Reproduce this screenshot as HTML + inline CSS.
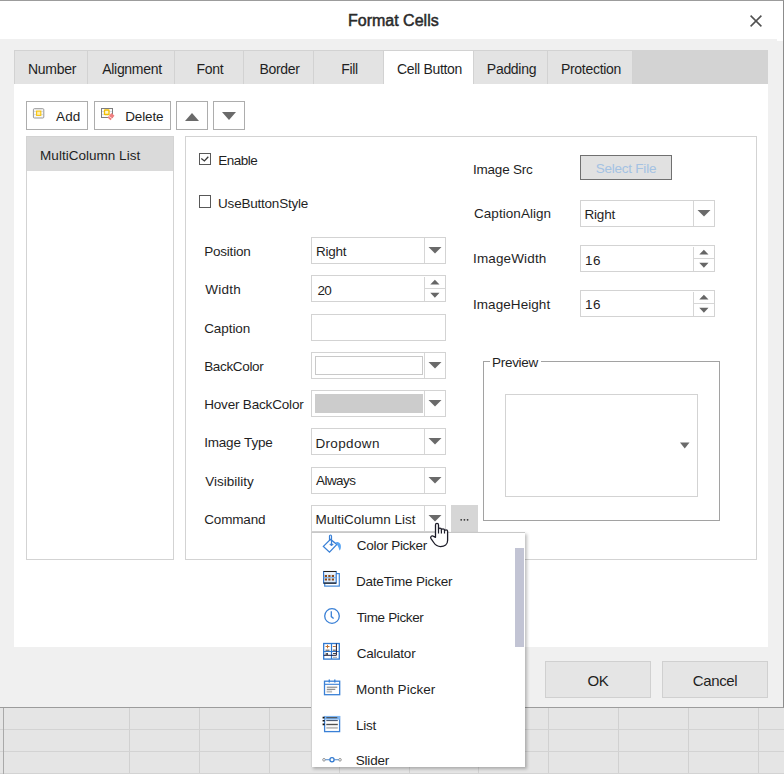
<!DOCTYPE html>
<html><head><meta charset="utf-8">
<style>
*{box-sizing:border-box;margin:0;padding:0}
html,body{width:784px;height:774px;overflow:hidden}
body{position:relative;background:#e5e5e5;font-family:"Liberation Sans",sans-serif;font-size:13px;color:#1f1f1f}
.a{position:absolute}
.t{position:absolute;white-space:pre;line-height:1;font-size:13px;color:#1f1f1f}
.gv{position:absolute;top:708px;height:66px;width:1px;background:#d1d1d1}
.gh{position:absolute;left:0;width:784px;height:1px;background:#d3d3d3}
.tab{position:absolute;top:50px;height:34px;background:#e3e3e3;border-top:1px solid #d2d2d2;border-left:1px solid #d2d2d2}
.tt{position:absolute;white-space:pre;line-height:1;font-size:14px;letter-spacing:-0.3px;color:#1f1f1f}
.btn{position:absolute;background:#fff;border:1px solid #adadad}
.box{position:absolute;background:#fff;border:1px solid #d0d0d0}
.sep{position:absolute;top:0;bottom:0;width:1px;background:#d8d8d8}
.arr{position:absolute;width:0;height:0;border-left:6px solid transparent;border-right:6px solid transparent;border-top:6px solid #6d6d6d}
.ua{position:absolute;width:0;height:0;border-left:5px solid transparent;border-right:5px solid transparent;border-bottom:5px solid #6d6d6d}
.da{position:absolute;width:0;height:0;border-left:5px solid transparent;border-right:5px solid transparent;border-top:5px solid #6d6d6d}
</style></head>
<body>
<div class="gv" style="left:129px"></div>
<div class="gv" style="left:199px"></div>
<div class="gv" style="left:269px"></div>
<div class="gv" style="left:339px"></div>
<div class="gv" style="left:409px"></div>
<div class="gv" style="left:478px"></div>
<div class="gv" style="left:548px"></div>
<div class="gv" style="left:618px"></div>
<div class="gv" style="left:688px"></div>
<div class="gv" style="left:758px"></div>
<div class="gh" style="top:729px"></div>
<div class="gh" style="top:751px"></div>
<div class="gh" style="top:773px"></div>
<div class="gv" style="left:3px;background:#a9a9a9"></div>
<div class="a" style="left:0;top:0;width:784px;height:708px;background:#f0f0f0;border-top:1px solid #9c9c9c;border-right:1px solid #8c8c8c;border-bottom:1px solid #9c9c9c"></div>
<div class="a" style="left:0;top:1px;width:783px;height:38px;background:#fff"></div>
<div class="a" style="left:777px;top:39px;width:6px;height:2px;background:#fff"></div>
<div class="t" style="left:348px;top:12.5px;font-size:16px;-webkit-text-stroke:0.5px #2a2a2a;color:#2a2a2a">Format Cells</div>
<svg class="a" style="left:749px;top:14px" width="14" height="14" viewBox="0 0 14 14"><path d="M1.6 1.6L12.4 12.4M12.4 1.6L1.6 12.4" stroke="#505050" stroke-width="1.5"/></svg>
<div class="a" style="left:14px;top:50px;width:754px;height:34px;background:#d3d3d3"></div>
<div class="tab" style="left:14px;width:74px;background:#e3e3e3"></div>
<div class="tt" style="left:15px;width:74px;text-align:center;top:61.7px">Number</div>
<div class="tab" style="left:87px;width:88px;background:#e3e3e3"></div>
<div class="tt" style="left:88px;width:88px;text-align:center;top:61.7px">Alignment</div>
<div class="tab" style="left:174px;width:70px;background:#e3e3e3"></div>
<div class="tt" style="left:175px;width:70px;text-align:center;top:61.7px">Font</div>
<div class="tab" style="left:243px;width:71px;background:#e3e3e3"></div>
<div class="tt" style="left:244px;width:71px;text-align:center;top:61.7px">Border</div>
<div class="tab" style="left:313px;width:71px;background:#e3e3e3"></div>
<div class="tt" style="left:314px;width:71px;text-align:center;top:61.7px">Fill</div>
<div class="tab" style="left:383px;width:91px;background:#fff"></div>
<div class="tt" style="left:384px;width:91px;text-align:center;top:61.7px">Cell Button</div>
<div class="tab" style="left:473px;width:75px;background:#e3e3e3"></div>
<div class="tt" style="left:474px;width:75px;text-align:center;top:61.7px">Padding</div>
<div class="tab" style="left:547px;width:86px;background:#e3e3e3;border-right:1px solid #d2d2d2"></div>
<div class="tt" style="left:548px;width:86px;text-align:center;top:61.7px">Protection</div>
<div class="a" style="left:14px;top:84px;width:754px;height:563px;background:#fff"></div>
<div class="btn" style="left:26px;top:101px;width:62px;height:29px"></div>
<svg class="a" style="left:32px;top:107px" width="13" height="12" viewBox="0 0 13 12">
<rect x="1.4" y="1.7" width="10.4" height="9.3" rx="1" fill="#f7f7f7" stroke="#979797"/>
<path d="M2 4.5H11M2 7.5H11" stroke="#d6dbe6" stroke-width="1"/>
<rect x="4.6" y="4.1" width="4.2" height="4.3" fill="#ffeeb0" stroke="#f7c40a" stroke-width="1.1"/>
</svg>
<div class="t" style="left:56.10px;top:110.17px;font-size:13.5px;letter-spacing:0.1px;">Add</div>
<div class="btn" style="left:94px;top:101px;width:77px;height:29px"></div>
<svg class="a" style="left:100px;top:106px" width="18" height="15" viewBox="0 0 18 15">
<rect x="1.5" y="2.5" width="11" height="9" fill="#fbfbfb" stroke="#7e7e7e"/>
<path d="M2 5.5H12M2 8.5H12" stroke="#d6dbe6" stroke-width="1"/>
<rect x="4.5" y="4" width="4.5" height="4.5" rx="0.6" fill="#fff6d0" stroke="#f2bf00" stroke-width="1.3"/>
<path d="M7.5 11.5L11.5 7L14.5 9.8L10.5 14.2Z" fill="#f07f80"/>
<path d="M8.8 10.2L12 12.6" stroke="#fff" stroke-width="0.7"/>
</svg>
<div class="t" style="left:125.20px;top:110.17px;font-size:13.5px;letter-spacing:-0.12px;">Delete</div>
<div class="btn" style="left:176px;top:101px;width:32px;height:29px"></div>
<div class="btn" style="left:213px;top:101px;width:32px;height:29px"></div>
<div class="box" style="left:26px;top:136px;width:148px;height:424px;border-color:#d3d3d3"></div>
<div class="a" style="left:27px;top:137px;width:146px;height:34px;background:#dadada"></div>
<div class="t" style="left:40.10px;top:149.37px;font-size:13.5px;letter-spacing:0.02px;">MultiColumn List</div>
<div class="box" style="left:185px;top:136px;width:572px;height:424px;border-color:#d3d3d3"></div>
<div class="a" style="left:199px;top:153px;width:12px;height:12px;border:1px solid #585858;background:#fff"></div>
<svg class="a" style="left:196px;top:150px" width="20" height="20" viewBox="0 0 20 20"><path d="M5.3 8.4L8.4 10.9L12.3 6.7" fill="none" stroke="#3a3a3a" stroke-width="1.3"/></svg>
<div class="t" style="left:218.30px;top:153.57px;font-size:13.5px;letter-spacing:-0.5px;">Enable</div>
<div class="a" style="left:199px;top:195px;width:12px;height:13px;border:1px solid #585858;background:#fff"></div>
<div class="t" style="left:218.10px;top:197.07px;font-size:13.5px;letter-spacing:-0.22px;">UseButtonStyle</div>
<div class="t" style="left:204.20px;top:245.07px;font-size:13.5px;letter-spacing:-0.21px;">Position</div>
<div class="t" style="left:205.20px;top:283.37px;font-size:13.5px;letter-spacing:0.28px;">Width</div>
<div class="t" style="left:204.20px;top:322.17px;font-size:13.5px;letter-spacing:-0.07px;">Caption</div>
<div class="t" style="left:204.20px;top:360.17px;font-size:13.5px;letter-spacing:-0.34px;">BackColor</div>
<div class="t" style="left:204.20px;top:397.77px;font-size:13.5px;letter-spacing:-0.18px;">Hover BackColor</div>
<div class="t" style="left:204.20px;top:435.87px;font-size:13.5px;letter-spacing:-0.19px;">Image Type</div>
<div class="t" style="left:205.20px;top:475.07px;font-size:13.5px;letter-spacing:0.01px;">Visibility</div>
<div class="t" style="left:204.20px;top:512.87px;font-size:13.5px;letter-spacing:-0.15px;">Command</div>
<div class="box" style="left:311px;top:237px;width:135px;height:27px;border-color:#d3d3d3"></div>
<div class="a" style="left:424px;top:238px;width:1px;height:25px;background:#d6d6d6"></div>
<div class="t" style="left:315.90px;top:245.07px;font-size:13.5px;letter-spacing:-0.2px;">Right</div>
<div class="box" style="left:311px;top:275px;width:135px;height:27px;border-color:#d3d3d3"></div>
<div class="a" style="left:424px;top:277px;width:1px;height:24px;background:#d6d6d6"></div>
<div class="a" style="left:424px;top:288px;width:21px;height:1px;background:#d6d6d6"></div>
<div class="t" style="left:317.40px;top:284.17px;font-size:13.5px;letter-spacing:-0.6px;">20</div>
<div class="box" style="left:311px;top:314px;width:135px;height:27px;border-color:#d3d3d3"></div>
<div class="box" style="left:311px;top:352px;width:135px;height:27px;border-color:#d3d3d3"></div>
<div class="a" style="left:424px;top:353px;width:1px;height:25px;background:#d6d6d6"></div>
<div class="a" style="left:315px;top:356px;width:108px;height:19px;border:1px solid #c9c9c9;background:#fff"></div>
<div class="box" style="left:311px;top:390px;width:135px;height:27px;border-color:#d3d3d3"></div>
<div class="a" style="left:424px;top:391px;width:1px;height:25px;background:#d6d6d6"></div>
<div class="a" style="left:315px;top:394px;width:108px;height:19px;background:#cccccc"></div>
<div class="box" style="left:311px;top:428px;width:135px;height:27px;border-color:#d3d3d3"></div>
<div class="a" style="left:424px;top:429px;width:1px;height:25px;background:#d6d6d6"></div>
<div class="t" style="left:315.40px;top:437.07px;font-size:13.5px;letter-spacing:0.36px;">Dropdown</div>
<div class="box" style="left:311px;top:467px;width:135px;height:27px;border-color:#d3d3d3"></div>
<div class="a" style="left:424px;top:468px;width:1px;height:25px;background:#d6d6d6"></div>
<div class="t" style="left:316.10px;top:474.47px;font-size:13.5px;letter-spacing:-0.58px;">Always</div>
<div class="box" style="left:311px;top:505px;width:135px;height:27px;border-color:#d3d3d3"></div>
<div class="a" style="left:424px;top:506px;width:1px;height:25px;background:#d6d6d6"></div>
<div class="t" style="left:315.40px;top:512.77px;font-size:13.5px;letter-spacing:0.03px;">MultiColumn List</div>
<div class="a" style="left:451px;top:505px;width:27px;height:27px;background:#d6d6d6"></div>
<div class="t" style="left:473.00px;top:162.97px;font-size:13.5px;letter-spacing:-0.21px;">Image Src</div>
<div class="a" style="left:580px;top:155px;width:92px;height:25px;background:#e1e1e1;border:1px solid #707070"></div>
<div class="t" style="left:595.70px;top:161.77px;font-size:13.5px;letter-spacing:-0.23px;color:#a4c2e3">Select File</div>
<div class="t" style="left:474.00px;top:207.47px;font-size:13.5px;letter-spacing:0.05px;">CaptionAlign</div>
<div class="box" style="left:580px;top:200px;width:135px;height:27px;border-color:#d3d3d3"></div>
<div class="a" style="left:693px;top:201px;width:1px;height:25px;background:#d6d6d6"></div>
<div class="t" style="left:584.50px;top:207.67px;font-size:13.5px;letter-spacing:-0.2px;">Right</div>
<div class="t" style="left:473.00px;top:252.27px;font-size:13.5px;letter-spacing:0.14px;">ImageWidth</div>
<div class="box" style="left:580px;top:245px;width:135px;height:27px;border-color:#d3d3d3"></div>
<div class="a" style="left:693px;top:247px;width:1px;height:24px;background:#d6d6d6"></div>
<div class="a" style="left:693px;top:258px;width:21px;height:1px;background:#d6d6d6"></div>
<div class="t" style="left:585.00px;top:253.57px;font-size:13.5px;letter-spacing:0.4px;">16</div>
<div class="t" style="left:473.00px;top:297.67px;font-size:13.5px;letter-spacing:0.06px;">ImageHeight</div>
<div class="box" style="left:580px;top:290px;width:135px;height:27px;border-color:#d3d3d3"></div>
<div class="a" style="left:693px;top:292px;width:1px;height:24px;background:#d6d6d6"></div>
<div class="a" style="left:693px;top:303px;width:21px;height:1px;background:#d6d6d6"></div>
<div class="t" style="left:585.00px;top:298.37px;font-size:13.5px;letter-spacing:0.4px;">16</div>
<div class="a" style="left:483px;top:361px;width:237px;height:160px;border:1px solid #a2a2a2"></div>
<div class="a" style="left:490px;top:355px;width:51px;height:12px;background:#fff"></div>
<div class="t" style="left:492.10px;top:355.87px;font-size:13.5px;letter-spacing:-0.32px;">Preview</div>
<div class="box" style="left:505px;top:394px;width:193px;height:103px;border-color:#d3d3d3"></div>
<div class="a" style="left:545px;top:661px;width:106px;height:37px;background:#e5e5e5;border:1px solid #d0d0d0"></div>
<div class="t" style="left:545px;top:673.2px;width:106px;text-align:center;font-size:15px;letter-spacing:-0.4px">OK</div>
<div class="a" style="left:662px;top:661px;width:106px;height:37px;background:#e5e5e5;border:1px solid #d0d0d0"></div>
<div class="t" style="left:662px;top:673.2px;width:106px;text-align:center;font-size:15px;letter-spacing:-0.4px">Cancel</div>
<svg class="a" style="left:0;top:0" width="784" height="774" viewBox="0 0 784 774"><path d="M185 121L199 121L192 113Z" fill="#6a6a6a"/><path d="M222 112L236 112L229 120Z" fill="#6a6a6a"/><path d="M428.5 247L441.5 247L435 253.5Z" fill="#6a6a6a"/><path d="M430.3 284.5L439.5 284.5L434.9 279.7Z" fill="#666"/><path d="M430.3 292.8L439.5 292.8L434.9 297.8Z" fill="#666"/><path d="M428.5 362L441.5 362L435 368.5Z" fill="#6a6a6a"/><path d="M428.5 400L441.5 400L435 406.5Z" fill="#6a6a6a"/><path d="M428.5 438L441.5 438L435 444.5Z" fill="#6a6a6a"/><path d="M428.5 477L441.5 477L435 483.5Z" fill="#6a6a6a"/><path d="M428.5 515L441.5 515L435 521.5Z" fill="#6a6a6a"/><circle cx="461.2" cy="519.8" r="0.9" fill="#333"/><circle cx="464.4" cy="519.8" r="0.9" fill="#333"/><circle cx="467.6" cy="519.8" r="0.9" fill="#333"/><path d="M697.5 210L710.5 210L704 216.5Z" fill="#6a6a6a"/><path d="M699.3 254.5L708.5 254.5L703.9 249.7Z" fill="#666"/><path d="M699.3 262.8L708.5 262.8L703.9 267.8Z" fill="#666"/><path d="M699.3 299.5L708.5 299.5L703.9 294.7Z" fill="#666"/><path d="M699.3 307.8L708.5 307.8L703.9 312.8Z" fill="#666"/><path d="M680 442.5L689.5 442.5L684.75 448.5Z" fill="#6a6a6a"/></svg>
<div class="a" style="left:311px;top:532px;width:214px;height:235px;background:#fff;border-top:1px solid #c8c8c8;border-left:1px solid #d2d2d2;box-shadow:2px 2px 3px rgba(0,0,0,0.25)"></div>
<div class="a" style="left:515px;top:548px;width:9px;height:99px;background:#c2c4d4"></div>
<svg class="a" style="left:320px;top:532px" width="24" height="24" viewBox="0 0 24 24">
<path d="M3.4 14.4L10.5 7.4L16.9 12.4L9.5 20.2Z" fill="none" stroke="#3a80d6" stroke-width="1.3" stroke-linejoin="miter"/>
<path d="M9.5 8.2V4.2C9.5 2.6 11.5 2.6 11.5 4.2V13" fill="none" stroke="#3a80d6" stroke-width="1.2"/>
<path d="M9.8 12.2L11.5 13.9L13.2 12.2Z" fill="#3a80d6" stroke="#3a80d6" stroke-width="0.8"/>
<path d="M16 10C19.5 9.5 21.5 12 20.8 16C20.5 17.5 20 18.5 19.5 18.5C19 17 18.5 14.5 17 12.8Z" fill="#5aa6f4"/>
</svg>
<div class="t" style="left:356.70px;top:538.77px;font-size:13.5px;letter-spacing:-0.26px;">Color Picker</div>
<svg class="a" style="left:320px;top:566px" width="24" height="24" viewBox="0 0 24 24">
<rect x="4.7" y="7.6" width="14.6" height="12.5" fill="#fff" stroke="#3f86d8" stroke-width="1.2"/>
<rect x="3.6" y="5.5" width="12.6" height="11.6" fill="#dcebfb" stroke="#2a6fc9" stroke-width="1.1"/>
<path d="M3.6 5.5H16.2M3.6 17.1H16.2" stroke="#222" stroke-width="1.1"/>
<path d="M3.6 11.7H16.2" stroke="#6aa6e8" stroke-width="0.9"/><path d="M4.8 10h2.2M8.3 10h2.2M11.8 10h2.2M4.8 13.5h2.2M8.3 13.5h2.2M11.8 13.5h2.2" stroke="#8a4a1a" stroke-width="1.8"/>
<path d="M4.5 7h11" stroke="#fff" stroke-width="1"/>
</svg>
<div class="t" style="left:355.90px;top:574.77px;font-size:13.5px;letter-spacing:-0.19px;">DateTime Picker</div>
<svg class="a" style="left:320px;top:604px" width="24" height="24" viewBox="0 0 24 24">
<circle cx="12" cy="12" r="7.3" fill="none" stroke="#3a80d6" stroke-width="1.3"/>
<path d="M11.3 7.3V12.6L13.6 14.6" fill="none" stroke="#3a80d6" stroke-width="1.3"/>
</svg>
<div class="t" style="left:356.70px;top:610.77px;font-size:13.5px;letter-spacing:-0.36px;">Time Picker</div>
<svg class="a" style="left:320px;top:640px" width="24" height="24" viewBox="0 0 24 24">
<rect x="3.7" y="3.5" width="15.6" height="15.6" fill="#fff" stroke="#2f78d0" stroke-width="1.3"/>
<path d="M11.5 3.5V19.1M3.7 11.5H19.3" stroke="#2f78d0" stroke-width="1.2"/>
<path d="M5.5 6.5h4M7.5 4.8v3.5M12.8 6.5h3" stroke="#c07030" stroke-width="1"/>
<path d="M5.5 10.2h4M12.8 10.2h3M5.5 13.2l2.5 1.5M8 13.2l-2.5 1.5M13 13.5h3" stroke="#333" stroke-width="0.9"/>
<path d="M3.7 15.3H16.4V3.5" fill="none" stroke="#1a1a3a" stroke-width="1"/>
<path d="M13 17.3h4" stroke="#999" stroke-width="0.9"/>
</svg>
<div class="t" style="left:356.70px;top:646.87px;font-size:13.5px;letter-spacing:-0.2px;">Calculator</div>
<svg class="a" style="left:320px;top:676px" width="24" height="24" viewBox="0 0 24 24">
<rect x="4.5" y="5.2" width="15.2" height="13.5" fill="#fff" stroke="#3a80d6" stroke-width="1.3"/>
<path d="M4.5 8.3H19.7" stroke="#3a80d6" stroke-width="1.1"/>
<path d="M9.3 3.5V6.5M14.8 3.5V6.5" stroke="#3a80d6" stroke-width="1.4"/>
<path d="M6.8 11.2h10.5M6.8 13.3h8.5" stroke="#666" stroke-width="0.9"/>
<rect x="6.6" y="14.6" width="5.5" height="2" fill="#bdbdbd"/>
</svg>
<div class="t" style="left:356.00px;top:682.77px;font-size:13.5px;letter-spacing:0.05px;">Month Picker</div>
<svg class="a" style="left:320px;top:712px" width="24" height="24" viewBox="0 0 24 24">
<rect x="4.6" y="4.6" width="15" height="15" fill="#fff" stroke="#3a80d6" stroke-width="1.3"/>
<rect x="4" y="4" width="16" height="3.6" fill="#7db5f3"/>
<path d="M6.3 5.7h11" stroke="#4a4a4a" stroke-width="1.1"/>
<path d="M6.3 8.5h11.5" stroke="#4d5d78" stroke-width="1.1"/>
<path d="M6.3 9.6h11.5" stroke="#e8e8e8" stroke-width="0.9"/>
<path d="M6.3 12.5h11.5" stroke="#505050" stroke-width="1.4"/>
<path d="M6.3 13.8h11.5" stroke="#e2e2e2" stroke-width="0.9"/>
<path d="M6.3 15.9h11.5" stroke="#bdbdbd" stroke-width="1.8"/>
<path d="M2.6 5.6h2M2.6 8.8h2M2.6 12.4h2" stroke="#111" stroke-width="1.6"/>
</svg>
<div class="t" style="left:356.00px;top:718.87px;font-size:13.5px;letter-spacing:-0.23px;">List</div>
<svg class="a" style="left:320px;top:750px" width="24" height="14" viewBox="0 0 24 14">
<circle cx="4" cy="9.8" r="1.3" fill="none" stroke="#888" stroke-width="0.9"/>
<circle cx="20" cy="9.8" r="1.3" fill="none" stroke="#888" stroke-width="0.9"/>
<circle cx="12" cy="9.8" r="2.1" fill="none" stroke="#2f78d0" stroke-width="1.3"/>
<path d="M5.3 9.8h4.5M14.2 9.8h4.5" stroke="#4a86cc" stroke-width="1.1"/>
</svg>
<div class="a" style="left:312px;top:740px;width:200px;height:27px;overflow:hidden"><div class="t" style="left:43.80px;top:14.37px;font-size:13.5px;letter-spacing:-0.22px">Slider</div></div>
<svg class="a" style="left:424px;top:516px" width="30" height="34" viewBox="0 0 30 34">
<path d="M11.5 21.3L11.5 9C11.5 6.9 14.5 6.9 14.5 9L14.5 13.6C14.5 11.6 17.4 11.6 17.4 13.6L17.4 14.2C17.4 12.3 20.5 12.3 20.5 14.2L20.5 15.2C20.5 13.3 23.6 13.3 23.6 15.2L23.6 24.5C23.6 28.3 20.6 30.6 16.5 30.6C13.3 30.6 11.4 29 9.7 26.5L7 22.6C6 21 7.6 19.2 9.2 20.1Z" fill="#fff" stroke="#1c1c28" stroke-width="1.3" stroke-linejoin="round"/>
<path d="M14.5 13.6V17.6M17.4 14.2V17.6M20.5 15.2V17.6" stroke="#1c1c28" stroke-width="1.2"/>
</svg>
</body></html>
